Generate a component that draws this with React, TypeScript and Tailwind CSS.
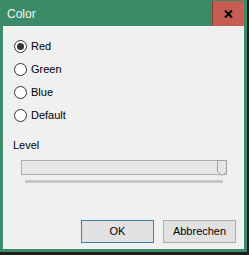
import React from "react";

function Radio({ label, checked }: { label: string; checked?: boolean }) {
  return (
    <div className="h-[23px] flex items-center pl-[11px]">
      <span className="w-[13px] h-[13px] rounded-full border border-[#333333] bg-white flex items-center justify-center">
        {checked && <span className="w-[7px] h-[7px] rounded-full bg-[#333333]" />}
      </span>
      <span className="ml-[4px] text-[11px] leading-[13px] text-black">{label}</span>
    </div>
  );
}

export default function App() {
  return (
    <div
      className="w-[249px] h-[255px] bg-[#1e1e1e]"
      style={{ fontFamily: '"Liberation Sans", Arial, sans-serif' }}
    >
      <div className="w-[247px] h-[252px] bg-[#3b8b68] flex flex-col px-[3px] pb-[3px]">
        <div className="h-[26px] flex items-center">
          <span className="pl-[4px] text-[12px] text-[#f4f4f4] mt-[1px]">Color</span>
          <div className="ml-auto self-end w-[32px] h-[25px] bg-[#c75d52] border-l border-[#8a4038] flex items-center justify-center">
            <svg width="9" height="8" viewBox="0 0 9 8">
              <path d="M1 0.5 L8 7.5 M8 0.5 L1 7.5" stroke="#000" strokeWidth="2" />
            </svg>
          </div>
        </div>
        <div className="flex-1 bg-[#f0f0f0] flex flex-col border-t border-[#f7f7f7]">
          <div className="pt-[8px] flex flex-col">
            <Radio label="Red" checked />
            <Radio label="Green" />
            <Radio label="Blue" />
            <Radio label="Default" />
          </div>
          <div className="mt-[12px] pl-[10px] text-[11px] leading-[13px] text-black">Level</div>
          <div className="mt-[8px] ml-[18px] w-[206px] h-[15px] border border-[#adadad] bg-[#e6e8e8] relative">
            <svg className="absolute right-[-1px] top-[-1px]" width="10" height="16" viewBox="0 0 10 16">
              <path d="M0.5 0.5 H9.5 V12 L5 15.5 L0.5 12 Z" fill="#e6e6e6" stroke="#a0a0a0" strokeWidth="1" strokeDasharray="" />
            </svg>
          </div>
          <div className="mt-[5px] ml-[22px] w-[198px] h-[3px] bg-[#c6c6c6]" />
          <div className="mt-auto mb-[6px] flex justify-end gap-[9px] pr-[8px]">
            <div className="w-[73px] h-[23px] border border-[#3c7fb1] bg-[#e1e1e1] flex items-center justify-center text-[11px] text-black">
              OK
            </div>
            <div className="w-[73px] h-[23px] border border-[#adadad] bg-[#e1e1e1] flex items-center justify-center text-[11px] text-black">
              Abbrechen
            </div>
          </div>
        </div>
      </div>
    </div>
  );
}
